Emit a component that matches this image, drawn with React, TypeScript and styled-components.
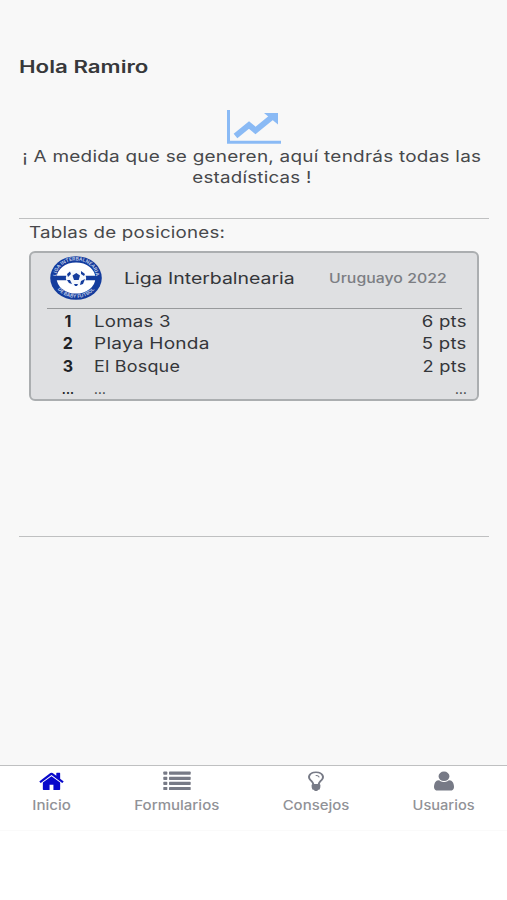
import React from "react";
import styled, { createGlobalStyle } from "styled-components";

const Global = createGlobalStyle`
  * { box-sizing: border-box; }
  body { margin: 0; background: #fff; font-family: Inter, "Open Sans", sans-serif; color: #47484b; }
`;

const Page = styled.div`
  height: 900px;
  display: flex;
  flex-direction: column;
  overflow: hidden;
`;

const Main = styled.main`
  height: 765px;
  padding: 54px 18px 0 19px;
  background: #f8f8f8;
`;

const Wide = styled.span<{ $scale: number; $origin?: string }>`
  display: inline-block;
  white-space: nowrap;
  transform: scaleX(${(p) => p.$scale});
  transform-origin: ${(p) => p.$origin ?? "left"} center;
`;

const Greeting = styled.h1`
  margin: 0;
  height: 56px;
  font-size: 17px;
  line-height: 26px;
  font-weight: 600;
  color: #37383b;
`;

const Stats = styled.section`
  height: 109px;
  display: flex;
  flex-direction: column;
  align-items: center;
  border-bottom: 1px solid #bfc0c1;
  font-size: 16px;
  line-height: 21px;
  letter-spacing: 0.2px;

  svg { display: block; flex: none; margin: 0 0 2px; }
  span { margin-right: 5px; }
`;

const Standings = styled.section`
  height: 318px;
  padding: 2px 10px 0;
  border-bottom: 1px solid #bfc0c1;
`;

const Label = styled.h2`
  margin: 0;
  height: 30px;
  font-size: 16px;
  line-height: 22px;
  font-weight: 400;
  letter-spacing: 0.2px;
`;

const Card = styled.article`
  height: 150px;
  padding: 0 10px 0 16px;
  background: #dfe0e2;
  border: 2px solid #abaeb0;
  border-radius: 6px;
  color: #34363a;
`;

const CardHead = styled.header`
  height: 56px;
  margin-right: 5px;
  display: flex;
  border-bottom: 1px solid #989a9c;

  svg { margin: 3px 0 0 3px; flex: none; }
`;

const League = styled.div`
  width: 227px;
  padding: 14px 0 0 22px;
  font-size: 16px;
  line-height: 22px;
`;

const Season = styled.div`
  padding-top: 15px;
  font-size: 13px;
  line-height: 21px;
  font-weight: 500;
  color: #7c7e83;
`;

const Row = styled.div<{ $more?: boolean }>`
  height: 22.4px;
  display: grid;
  grid-template-columns: 42px 1fr auto;
  column-gap: 5px;
  font-size: ${(p) => (p.$more ? 12 : 16)}px;
  line-height: ${(p) => (p.$more ? 28 : 24)}px;
  font-weight: ${(p) => (p.$more ? 600 : 400)};
  letter-spacing: 0.2px;
`;

const Rank = styled.div`
  text-align: center;
  font-weight: 700;
  color: #202226;
`;

const Nav = styled.nav`
  height: 66px;
  display: flex;
  border-top: 1px solid #bfc0c1;
  border-bottom: 1px solid #fafafa;
  background: #fff;
`;

const Tab = styled.a<{ $width: number; $active?: boolean }>`
  width: ${(p) => p.$width}px;
  display: flex;
  flex-direction: column;
  align-items: center;
  padding-top: 4px;
  font-size: 13px;
  font-weight: 500;
  line-height: 18px;
  color: #919297;

  svg { flex: none; height: 23px; margin-bottom: 3px; color: ${(p) => (p.$active ? "#0808cb" : "#777a86")}; }
`;

const rows = [
  { rank: "1", team: "Lomas 3", pts: "6 pts", scale: 1.165, ptsScale: 1.16 },
  { rank: "2", team: "Playa Honda", pts: "5 pts", scale: 1.19, ptsScale: 1.16 },
  { rank: "3", team: "El Bosque", pts: "2 pts", scale: 1.12, ptsScale: 1.14 },
  { rank: "...", team: "...", pts: "...", scale: 1.0, ptsScale: 1.0, more: true },
];

const Chart = () => (
  <svg width="54" height="34" viewBox="0 0 54 34">
    <path d="M1.5 0V32.3H54" fill="none" stroke="#8abaf5" strokeWidth="3" />
    <path d="M8.5 26L22 15L28.5 20.5L45 7" fill="none" stroke="#8abaf5" strokeWidth="5.8" />
    <path d="M37 3H51V14.5Z" fill="#8abaf5" />
  </svg>
);

const Crest = () => (
  <svg width="52" height="44" viewBox="0 0 52 44">
    <defs>
      <path id="crest-top" d="M6.2 21A19.8 16.5 0 0 1 45.8 21" />
      <path id="crest-bottom" d="M4 23A22 19 0 0 0 48 23" />
    </defs>
    <ellipse cx="26" cy="22" rx="25.8" ry="21.8" fill="#143c9d" />
    <ellipse cx="26" cy="22" rx="19.4" ry="15.6" fill="#fff" />
    <path d="M6 19.8H46V24.2H6Z" fill="#143c9d" />
    <ellipse cx="26" cy="22" rx="10.2" ry="8.3" fill="#f5f8fc" />
    <path d="M22.5 19.5L26.3 17L30 19.5L28.7 24H24Z M17 18L20 15.5L21 18L18 21Z M31 15L35 18L34 20L31 18Z M17 24L20 24L22 28L19 27Z M31 25L35 23L33 28L30 29Z M24 28H28L27 30H25Z" fill="#143c9d" />
    <g fill="#c5d1ea" fontFamily="Inter" fontSize="4.9" fontWeight="600" textAnchor="middle">
      <text><textPath href="#crest-top" startOffset="50%">LIGA INTERBALNEARIA</textPath></text>
      <text><textPath href="#crest-bottom" startOffset="50%">DE BABY FUTBOL</textPath></text>
    </g>
  </svg>
);

const Home = () => (
  <svg width="25" height="23" viewBox="0 50 1664 1710" preserveAspectRatio="none" fill="currentColor">
    <path d="M1408 992v480q0 26-19 45t-45 19h-384v-384h-256v384h-384q-26 0-45-19t-19-45v-480q0-1 .5-3t.5-3l575-474 575 474q1 2 1 6zm223-69l-62 74q-8 9-21 11h-3q-13 0-21-7l-692-577-692 577q-12 8-24 7-13-2-21-11l-62-74q-8-10-7-23.5t11-21.5l719-599q32-26 76-26t76 26l244 204v-195q0-14 9-23t23-9h192q14 0 23 9t9 23v408l219 182q10 8 11 21.5t-7 23.5z" />
  </svg>
);

const List = () => (
  <svg width="28" height="23" viewBox="0 0 28 23" fill="currentColor">
    {[1.6, 6.7, 11.8, 16.9].map((y) => (
      <g key={y}>
        <rect x="0.3" y={y} width="4" height="3.2" rx="0.7" />
        <rect x="6" y={y} width="21.7" height="3.2" rx="0.7" />
      </g>
    ))}
  </svg>
);

const Bulb = () => (
  <svg width="16" height="23" viewBox="384 20 1024 1800" preserveAspectRatio="none" fill="currentColor">
    <path d="M1120 576q0 13-9.5 22.5t-22.5 9.5-22.5-9.5-9.5-22.5q0-46-54-71t-106-25q-13 0-22.5-9.5t-9.5-22.5 9.5-22.5 22.5-9.5q50 0 99.5 16t87 54 37.5 90zm160 0q0-72-34.5-134t-90-101.5-123-62-136.5-22.5-136.5 22.5-123 62-90 101.5-34.5 134q0 101 68 180 10 11 30.5 33t30.5 33q128 153 141 298h228q13-145 141-298 10-11 30.5-33t30.5-33q68-79 68-180zm128 0q0 155-103 268-45 49-74.5 87t-59.5 95.5-34 107.5q47 28 47 82 0 37-25 64 25 27 25 64 0 52-45 81 13 23 13 47 0 46-31.5 71t-77.5 25q-20 44-60 70t-87 26-87-26-60-70q-46 0-77.5-25t-31.5-71q0-24 13-47-45-29-45-81 0-37 25-64-25-27-25-64 0-54 47-82-4-50-34-107.5t-59.5-95.5-74.5-87q-103-113-103-268 0-99 44.5-184.5t117-142 164-89 186.5-32.5 186.5 32.5 164 89 117 142 44.5 184.5z" />
  </svg>
);

const User = () => (
  <svg width="20" height="23" viewBox="192 0 1408 1860" preserveAspectRatio="none" fill="currentColor">
    <path d="M1600 1405q0 120-73 189.5t-194 69.5h-874q-121 0-194-69.5t-73-189.5q0-53 3.5-103.5t14-109 26.5-108.5 43-97.5 62-81 85.5-53.5 111.5-20q9 0 42 21.5t74.5 48 108 48 133.5 21.5 133.5-21.5 108-48 74.5-48 42-21.5q61 0 111.5 20t85.5 53.5 62 81 43 97.5 26.5 108.5 14 109 3.5 103.5zm-320-893q0 159-112.5 271.5t-271.5 112.5-271.5-112.5-112.5-271.5 112.5-271.5 271.5-112.5 271.5 112.5 112.5 271.5z" />
  </svg>
);

export default function App() {
  return (
    <Page>
      <Global />
      <Main>
        <Greeting><Wide $scale={1.31}>Hola Ramiro</Wide></Greeting>
        <Stats>
          <Chart />
          <Wide $scale={1.184} $origin="center">¡ A medida que se generen, aquí tendrás todas las</Wide>
          <Wide $scale={1.17} $origin="center">estadísticas !</Wide>
        </Stats>
        <Standings>
          <Label><Wide $scale={1.17}>Tablas de posiciones:</Wide></Label>
          <Card>
            <CardHead>
              <Crest />
              <League><Wide $scale={1.215}>Liga Interbalnearia</Wide></League>
              <Season><Wide $scale={1.22}>Uruguayo 2022</Wide></Season>
            </CardHead>
            {rows.map((r) => (
              <Row key={r.rank} $more={r.more}>
                <Rank>{r.rank}</Rank>
                <div><Wide $scale={r.scale}>{r.team}</Wide></div>
                <div><Wide $scale={r.ptsScale} $origin="right">{r.pts}</Wide></div>
              </Row>
            ))}
          </Card>
        </Standings>
      </Main>
      <Nav>
        <Tab $width={103} $active><Home /><Wide $scale={1.16} $origin="center">Inicio</Wide></Tab>
        <Tab $width={148}><List /><Wide $scale={1.155} $origin="center">Formularios</Wide></Tab>
        <Tab $width={130}><Bulb /><Wide $scale={1.15} $origin="center">Consejos</Wide></Tab>
        <Tab $width={126}><User /><Wide $scale={1.125} $origin="center">Usuarios</Wide></Tab>
      </Nav>
    </Page>
  );
}
